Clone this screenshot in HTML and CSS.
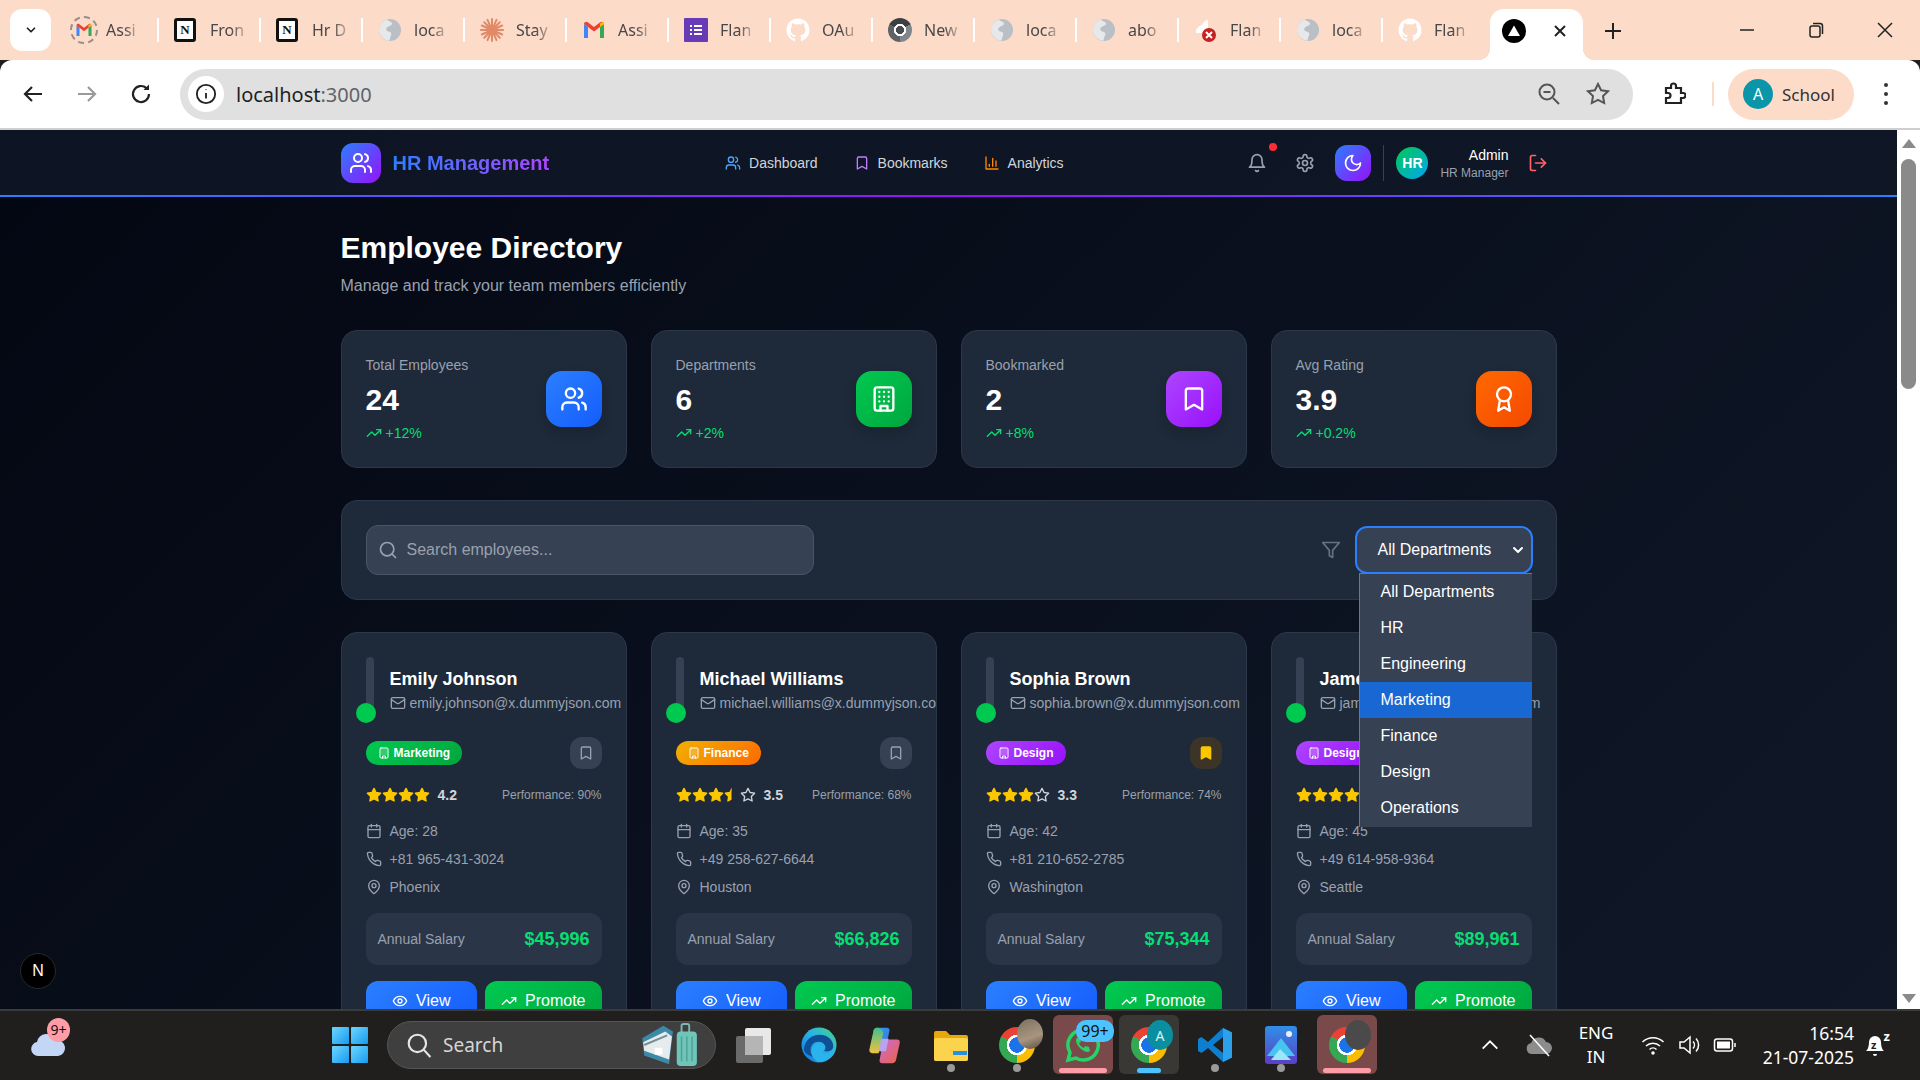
FILE: index.html
```html
<!DOCTYPE html>
<html lang="en">
<head>
    <meta charset="UTF-8">
    <title>HR Management</title>
    <link rel="stylesheet" href="styles.css">
</head>
<body>
    <!-- Icon sprite -->
    <svg class="sprite" aria-hidden="true">
        <defs>
            <linearGradient id="edgeGrad" x1="0" y1="1" x2="1" y2="0"><stop offset="0" stop-color="#1173d8"/><stop offset="0.55" stop-color="#28b3e8"/><stop offset="1" stop-color="#48d67c"/></linearGradient>
            <linearGradient id="photoGrad" x1="0" y1="0" x2="0" y2="1"><stop offset="0" stop-color="#2f8fe8"/><stop offset="1" stop-color="#5b3fc4"/></linearGradient>
            <linearGradient id="copilotA" x1="0" y1="0" x2="1" y2="1"><stop offset="0" stop-color="#2ea8f0"/><stop offset="1" stop-color="#3f6be0"/></linearGradient>
            <linearGradient id="copilotB" x1="0" y1="0" x2="1" y2="1"><stop offset="0" stop-color="#c768e0"/><stop offset="1" stop-color="#f0653c"/></linearGradient>
            <linearGradient id="copilotC" x1="0" y1="0" x2="0" y2="1"><stop offset="0" stop-color="#3fbf8f"/><stop offset="1" stop-color="#f2c23c"/></linearGradient>
        </defs>
        <symbol id="i-users" viewBox="0 0 24 24"><path d="M16 21v-2a4 4 0 0 0-4-4H6a4 4 0 0 0-4 4v2"/><circle cx="9" cy="7" r="4"/><path d="M22 21v-2a4 4 0 0 0-3-3.87"/><path d="M16 3.13a4 4 0 0 1 0 7.75"/></symbol>
        <symbol id="i-bookmark" viewBox="0 0 24 24"><path d="m19 21-7-4-7 4V5a2 2 0 0 1 2-2h10a2 2 0 0 1 2 2v16z"/></symbol>
        <symbol id="i-chart" viewBox="0 0 24 24"><path d="M3 3v18h18"/><path d="M18 17V9"/><path d="M13 17V5"/><path d="M8 17v-3"/></symbol>
        <symbol id="i-bell" viewBox="0 0 24 24"><path d="M6 8a6 6 0 0 1 12 0c0 7 3 9 3 9H3s3-2 3-9"/><path d="M10.3 21a1.94 1.94 0 0 0 3.4 0"/></symbol>
        <symbol id="i-gear" viewBox="0 0 24 24"><path d="M12.22 2h-.44a2 2 0 0 0-2 2v.18a2 2 0 0 1-1 1.73l-.43.25a2 2 0 0 1-2 0l-.15-.08a2 2 0 0 0-2.73.73l-.22.38a2 2 0 0 0 .73 2.73l.15.1a2 2 0 0 1 1 1.72v.51a2 2 0 0 1-1 1.74l-.15.09a2 2 0 0 0-.73 2.73l.22.38a2 2 0 0 0 2.73.73l.15-.08a2 2 0 0 1 2 0l.43.25a2 2 0 0 1 1 1.73V20a2 2 0 0 0 2 2h.44a2 2 0 0 0 2-2v-.18a2 2 0 0 1 1-1.73l.43-.25a2 2 0 0 1 2 0l.15.08a2 2 0 0 0 2.73-.73l.22-.39a2 2 0 0 0-.73-2.73l-.15-.08a2 2 0 0 1-1-1.74v-.5a2 2 0 0 1 1-1.74l.15-.09a2 2 0 0 0 .73-2.73l-.22-.38a2 2 0 0 0-2.73-.73l-.15.08a2 2 0 0 1-2 0l-.43-.25a2 2 0 0 1-1-1.73V4a2 2 0 0 0-2-2z"/><circle cx="12" cy="12" r="3"/></symbol>
        <symbol id="i-moon" viewBox="0 0 24 24"><path d="M12 3a6 6 0 0 0 9 9 9 9 0 1 1-9-9Z"/></symbol>
        <symbol id="i-logout" viewBox="0 0 24 24"><path d="M9 21H5a2 2 0 0 1-2-2V5a2 2 0 0 1 2-2h4"/><polyline points="16 17 21 12 16 7"/><line x1="21" x2="9" y1="12" y2="12"/></symbol>
        <symbol id="i-trend" viewBox="0 0 24 24"><polyline points="22 7 13.5 15.5 8.5 10.5 2 17"/><polyline points="16 7 22 7 22 13"/></symbol>
        <symbol id="i-building" viewBox="0 0 24 24"><rect x="4" y="2" width="16" height="20" rx="2"/><path d="M9 22v-4h6v4"/><path d="M8 6h.01M12 6h.01M16 6h.01M8 10h.01M12 10h.01M16 10h.01M8 14h.01M12 14h.01M16 14h.01"/></symbol>
        <symbol id="i-award" viewBox="0 0 24 24"><circle cx="12" cy="8" r="6"/><path d="M15.477 12.89 17 22l-5-3-5 3 1.523-9.11"/></symbol>
        <symbol id="i-search" viewBox="0 0 24 24"><circle cx="11" cy="11" r="8"/><path d="m21 21-4.3-4.3"/></symbol>
        <symbol id="i-filter" viewBox="0 0 24 24"><polygon points="22 3 2 3 10 12.46 10 19 14 21 14 12.46 22 3"/></symbol>
        <symbol id="i-mail" viewBox="0 0 24 24"><rect width="20" height="16" x="2" y="4" rx="2"/><path d="m22 7-8.97 5.7a1.94 1.94 0 0 1-2.06 0L2 7"/></symbol>
        <symbol id="i-star" viewBox="0 0 24 24"><polygon points="12 2 15.09 8.26 22 9.27 17 14.14 18.18 21.02 12 17.77 5.82 21.02 7 14.14 2 9.27 8.91 8.26 12 2"/></symbol>
        <symbol id="i-calendar" viewBox="0 0 24 24"><path d="M8 2v4M16 2v4"/><rect width="18" height="18" x="3" y="4" rx="2"/><path d="M3 10h18"/></symbol>
        <symbol id="i-phone" viewBox="0 0 24 24"><path d="M22 16.92v3a2 2 0 0 1-2.18 2 19.79 19.79 0 0 1-8.63-3.07 19.5 19.5 0 0 1-6-6 19.79 19.79 0 0 1-3.07-8.67A2 2 0 0 1 4.11 2h3a2 2 0 0 1 2 1.72 12.84 12.84 0 0 0 .7 2.81 2 2 0 0 1-.45 2.11L8.09 9.91a16 16 0 0 0 6 6l1.27-1.27a2 2 0 0 1 2.11-.45 12.84 12.84 0 0 0 2.81.7A2 2 0 0 1 22 16.92z"/></symbol>
        <symbol id="i-pin" viewBox="0 0 24 24"><path d="M20 10c0 6-8 12-8 12s-8-6-8-12a8 8 0 0 1 16 0Z"/><circle cx="12" cy="10" r="3"/></symbol>
        <symbol id="i-eye" viewBox="0 0 24 24"><path d="M2 12s3-7 10-7 10 7 10 7-3 7-10 7-10-7-10-7Z"/><circle cx="12" cy="12" r="3"/></symbol>
        <symbol id="i-chevron" viewBox="0 0 24 24"><path d="m6 9 6 6 6-6"/></symbol>
        <symbol id="f-globe" viewBox="0 0 24 24"><circle cx="12" cy="12" r="11" fill="#b9bfc5"/><path d="M9 1.6c1.6 2.2 4.6 1.8 5 4 .3 2-3 2.4-4.6 3.6C7.600 10.600 8 13 10.500 13.400c2.500.4 3.500 2 2.500 4-.8 1.600-1 3.400-1.800 5.400C6 22.400 1 17.600 1 12 1 7 4.500 2.800 9 1.600z" fill="#e6e8ea"/></symbol>
        <symbol id="f-gmail" viewBox="0 0 24 24"><path d="M2 20V6l4 3v11z" fill="#4285f4"/><path d="M22 20V6l-4 3v11z" fill="#34a853"/><path d="M2 6c0-2 2.200-3 3.800-1.800L12 9l6.200-4.800C19.800 3 22 4 22 6l-4 3-6 4.500L6 9z" fill="#ea4335"/><path d="M18 9l4-3c0-1-.5-1.800-1.300-2.200L18 5.800z" fill="#fbbc04"/></symbol>
        <symbol id="f-forms" viewBox="0 0 24 24"><rect width="24" height="24" rx="1" fill="#673ab7"/><path d="M6 7h2v2H6zM10 7h8v2h-8zM6 11h2v2H6zM10 11h8v2h-8zM6 15h2v2H6zM10 15h8v2h-8z" fill="#fff"/></symbol>
        <symbol id="f-github" viewBox="0 0 24 24"><path fill="#fff" d="M12 .5C5.650.5.500 5.650.500 12c0 5.080 3.290 9.390 7.860 10.910.580.100.790-.250.790-.560v-2c-3.200.700-3.870-1.360-3.870-1.360-.520-1.330-1.280-1.690-1.280-1.690-1.050-.720.080-.700.080-.700 1.160.080 1.770 1.190 1.770 1.190 1.030 1.760 2.700 1.250 3.360.960.100-.750.400-1.250.730-1.540-2.550-.290-5.240-1.280-5.240-5.690 0-1.260.450-2.280 1.190-3.090-.120-.290-.520-1.460.110-3.050 0 0 .970-.310 3.170 1.180a11 11 0 0 1 5.770 0c2.200-1.490 3.170-1.180 3.170-1.180.630 1.590.230 2.760.110 3.050.740.810 1.190 1.830 1.190 3.090 0 4.420-2.690 5.390-5.250 5.680.410.360.780 1.060.780 2.140v3.170c0 .310.210.670.790.560A11.500 11.500 0 0 0 23.500 12C23.500 5.650 18.350.500 12 .500z"/></symbol>
    </svg>

    <!-- Browser tab strip -->
    <div class="tab-strip">
        <div class="tab-menu"><svg class="ico ico-dark ico-14"><use href="#i-chevron"/></svg></div>
        <div class="tab-list">
            <div class="tab">
                <span class="fav-ring"><svg class="fav-small"><use href="#f-gmail"/></svg></span>
                <span class="tab-label">Assi</span>
            </div>
            <div class="tab"><span class="fav-notion">N</span><span class="tab-label">Fron</span></div>
            <div class="tab"><span class="fav-notion">N</span><span class="tab-label">Hr D</span></div>
            <div class="tab"><svg class="fav"><use href="#f-globe"/></svg><span class="tab-label">loca</span></div>
            <div class="tab">
                <svg class="fav" viewBox="0 0 24 24" stroke="#e08a68" stroke-width="2" stroke-linecap="round"><path d="M12 1v22M1 12h22M4.200 4.200l15.600 15.600M19.800 4.200 4.200 19.800M7.500 1.800l9 20.400M16.500 1.800l-9 20.400M1.800 7.500l20.400 9M22.200 7.500l-20.400 9"/></svg>
                <span class="tab-label">Stay</span>
            </div>
            <div class="tab"><svg class="fav"><use href="#f-gmail"/></svg><span class="tab-label">Assi</span></div>
            <div class="tab"><svg class="fav"><use href="#f-forms"/></svg><span class="tab-label">Flan</span></div>
            <div class="tab"><svg class="fav"><use href="#f-github"/></svg><span class="tab-label">OAu</span></div>
            <div class="tab"><span class="chrome-logo chrome-gray"></span><span class="tab-label">New</span></div>
            <div class="tab"><svg class="fav"><use href="#f-globe"/></svg><span class="tab-label">loca</span></div>
            <div class="tab"><svg class="fav"><use href="#f-globe"/></svg><span class="tab-label">abo</span></div>
            <div class="tab">
                <svg class="fav" viewBox="0 0 24 24"><path d="M2 14c0-4 3-6 6-7 1-3 3-5 6-5v13H2z" fill="#fff"/><circle cx="15" cy="17" r="7" fill="#c5221f"/><path d="m12 14 6 6m0-6-6 6" stroke="#fff" stroke-width="2"/></svg>
                <span class="tab-label">Flan</span>
            </div>
            <div class="tab"><svg class="fav"><use href="#f-globe"/></svg><span class="tab-label">loca</span></div>
            <div class="tab tab-last"><svg class="fav"><use href="#f-github"/></svg><span class="tab-label">Flan</span></div>
        </div>
        <div class="tab-active">
            <svg class="fav" viewBox="0 0 24 24"><circle cx="12" cy="12" r="12" fill="#000"/><path d="M12 6.500 18 17H6z" fill="#fff"/></svg>
            <svg class="tab-close" viewBox="0 0 14 14"><path d="m2 2 10 10M12 2 2 12"/></svg>
        </div>
        <svg class="tab-plus" viewBox="0 0 18 18"><path d="M9 1v16M1 9h16"/></svg>
        <div class="win-controls">
            <svg viewBox="0 0 16 16"><path d="M1 8h14"/></svg>
            <svg viewBox="0 0 16 16"><rect x="2" y="4" width="10" height="11" rx="2"/><path d="M5 1.500h7a2.500 2.500 0 0 1 2.500 2.500v8"/></svg>
            <svg viewBox="0 0 16 16"><path d="m1 1 14 14M15 1 1 15"/></svg>
        </div>
    </div>

    <!-- Browser toolbar -->
    <div class="toolbar">
        <svg class="tool-icon" viewBox="0 0 24 24"><path d="M21 12H4M11 5l-7 7 7 7"/></svg>
        <svg class="tool-icon tool-off" viewBox="0 0 24 24"><path d="M3 12h17M13 5l7 7-7 7"/></svg>
        <svg class="tool-icon" viewBox="0 0 24 24"><path d="M20 12a8 8 0 1 1-2.600-5.900"/><path d="M20 2.500V8h-5.500" fill="#222" stroke="none"/></svg>
        <div class="omnibox">
            <span class="site-info"><svg viewBox="0 0 24 24"><circle cx="12" cy="12" r="10"/><path d="M12 11v6M12 7v.5"/></svg></span>
            <span class="url">localhost<span class="url-port">:3000</span></span>
            <svg class="omni-icon" viewBox="0 0 24 24"><circle cx="10" cy="10" r="7.500"/><path d="m16 16 6 6M6.500 10h7"/></svg>
            <svg class="omni-icon" viewBox="0 0 24 24"><polygon points="12 2 15.090 8.260 22 9.270 17 14.140 18.180 21.020 12 17.770 5.820 21.020 7 14.140 2 9.270 8.910 8.260 12 2"/></svg>
        </div>
        <svg class="tool-icon tool-ext" viewBox="0 0 24 24"><path d="M4 6h5V4a2.500 2.500 0 0 1 5 0v2h5v5h2a2.500 2.500 0 0 1 0 5h-2v5H4v-5h2a2.500 2.500 0 0 0 0-5H4z"/></svg>
        <span class="tool-sep"></span>
        <div class="profile"><span class="profile-dot">A</span><span>School</span></div>
        <div class="kebab"><span></span><span></span><span></span></div>
    </div>

    <!-- Viewport: the app and the scrollbar -->
    <div class="viewport">
        <div class="app">
            <nav class="navbar">
                <div class="nav-inner">
                    <div class="brand">
                        <span class="brand-logo"><svg class="ico ico-white ico-24"><use href="#i-users"/></svg></span>
                        <span class="brand-name">HR Management</span>
                    </div>
                    <div class="nav-links">
                        <a class="nav-link"><svg class="ico ico-16 c-blue"><use href="#i-users"/></svg>Dashboard</a>
                        <a class="nav-link"><svg class="ico ico-16 c-purple"><use href="#i-bookmark"/></svg>Bookmarks</a>
                        <a class="nav-link"><svg class="ico ico-16 c-orange"><use href="#i-chart"/></svg>Analytics</a>
                    </div>
                    <div class="nav-actions">
                        <button class="icon-btn"><svg class="ico ico-20"><use href="#i-bell"/></svg><span class="notify-dot"></span></button>
                        <button class="icon-btn"><svg class="ico ico-20"><use href="#i-gear"/></svg></button>
                        <button class="theme-btn"><svg class="ico ico-white ico-20"><use href="#i-moon"/></svg></button>
                        <span class="nav-divider"></span>
                        <span class="user-avatar">HR</span>
                        <div class="user-info">
                            <div class="user-name">Admin</div>
                            <div class="user-role">HR Manager</div>
                        </div>
                        <button class="icon-btn logout-btn"><svg class="ico ico-20"><use href="#i-logout"/></svg></button>
                    </div>
                </div>
            </nav>

            <main class="main">
                <h1 class="page-title">Employee Directory</h1>
                <p class="page-sub">Manage and track your team members efficiently</p>

                <section class="stats">
                    <div class="stat-card">
                        <div>
                            <div class="stat-label">Total Employees</div>
                            <div class="stat-value">24</div>
                            <div class="stat-trend"><svg class="ico ico-16"><use href="#i-trend"/></svg>+12%</div>
                        </div>
                        <span class="stat-icon grad-blue"><svg class="ico ico-white ico-28"><use href="#i-users"/></svg></span>
                    </div>
                    <div class="stat-card">
                        <div>
                            <div class="stat-label">Departments</div>
                            <div class="stat-value">6</div>
                            <div class="stat-trend"><svg class="ico ico-16"><use href="#i-trend"/></svg>+2%</div>
                        </div>
                        <span class="stat-icon grad-green"><svg class="ico ico-white ico-28"><use href="#i-building"/></svg></span>
                    </div>
                    <div class="stat-card">
                        <div>
                            <div class="stat-label">Bookmarked</div>
                            <div class="stat-value">2</div>
                            <div class="stat-trend"><svg class="ico ico-16"><use href="#i-trend"/></svg>+8%</div>
                        </div>
                        <span class="stat-icon grad-purple"><svg class="ico ico-white ico-28"><use href="#i-bookmark"/></svg></span>
                    </div>
                    <div class="stat-card">
                        <div>
                            <div class="stat-label">Avg Rating</div>
                            <div class="stat-value">3.9</div>
                            <div class="stat-trend"><svg class="ico ico-16"><use href="#i-trend"/></svg>+0.2%</div>
                        </div>
                        <span class="stat-icon grad-orange"><svg class="ico ico-white ico-28"><use href="#i-award"/></svg></span>
                    </div>
                </section>

                <section class="filter-bar">
                    <div class="search-box">
                        <svg class="ico ico-20 search-icon"><use href="#i-search"/></svg>
                        <input class="search-input" type="text" placeholder="Search employees...">
                    </div>
                    <div class="filter-right">
                        <svg class="ico ico-20 filter-icon"><use href="#i-filter"/></svg>
                        <div class="dept-select">
                            <span>All Departments</span>
                            <svg class="ico ico-white ico-16 dept-chevron"><use href="#i-chevron"/></svg>
                            <ul class="dept-menu">
                                <li>All Departments</li>
                                <li>HR</li>
                                <li>Engineering</li>
                                <li class="selected">Marketing</li>
                                <li>Finance</li>
                                <li>Design</li>
                                <li>Operations</li>
                            </ul>
                        </div>
                    </div>
                </section>

                <section class="employees">
                    <!-- Emily -->
                    <article class="emp-card">
                        <div class="emp-head">
                            <div class="emp-avatar"><span class="emp-status"></span></div>
                            <div>
                                <div class="emp-name">Emily Johnson</div>
                                <div class="emp-email"><svg class="ico ico-16"><use href="#i-mail"/></svg>emily.johnson@x.dummyjson.com</div>
                            </div>
                        </div>
                        <div class="emp-tags">
                            <span class="dept-badge grad-green"><svg class="ico ico-white ico-12"><use href="#i-building"/></svg>Marketing</span>
                            <button class="mark-btn"><svg class="ico ico-16"><use href="#i-bookmark"/></svg></button>
                        </div>
                        <div class="emp-rating">
                            <span class="stars">
                                <svg class="star-full"><use href="#i-star"/></svg><svg class="star-full"><use href="#i-star"/></svg><svg class="star-full"><use href="#i-star"/></svg><svg class="star-full"><use href="#i-star"/></svg>
                            </span>
                            <span class="rating-num">4.2</span>
                            <span class="perf">Performance: 90%</span>
                        </div>
                        <ul class="emp-info">
                            <li><svg class="ico ico-16"><use href="#i-calendar"/></svg>Age: 28</li>
                            <li><svg class="ico ico-16"><use href="#i-phone"/></svg>+81 965-431-3024</li>
                            <li><svg class="ico ico-16"><use href="#i-pin"/></svg>Phoenix</li>
                        </ul>
                        <div class="salary"><span class="salary-label">Annual Salary</span><span class="salary-value">$45,996</span></div>
                        <div class="emp-actions">
                            <button class="act-btn grad-blue"><svg class="ico ico-white ico-16"><use href="#i-eye"/></svg>View</button>
                            <button class="act-btn grad-green"><svg class="ico ico-white ico-16"><use href="#i-trend"/></svg>Promote</button>
                        </div>
                    </article>

                    <!-- Michael -->
                    <article class="emp-card">
                        <div class="emp-head">
                            <div class="emp-avatar"><span class="emp-status"></span></div>
                            <div>
                                <div class="emp-name">Michael Williams</div>
                                <div class="emp-email"><svg class="ico ico-16"><use href="#i-mail"/></svg>michael.williams@x.dummyjson.com</div>
                            </div>
                        </div>
                        <div class="emp-tags">
                            <span class="dept-badge grad-amber"><svg class="ico ico-white ico-12"><use href="#i-building"/></svg>Finance</span>
                            <button class="mark-btn"><svg class="ico ico-16"><use href="#i-bookmark"/></svg></button>
                        </div>
                        <div class="emp-rating">
                            <span class="stars">
                                <svg class="star-full"><use href="#i-star"/></svg><svg class="star-full"><use href="#i-star"/></svg><svg class="star-full"><use href="#i-star"/></svg><span class="star-half"><svg class="star-full"><use href="#i-star"/></svg></span><svg class="star-empty"><use href="#i-star"/></svg>
                            </span>
                            <span class="rating-num">3.5</span>
                            <span class="perf">Performance: 68%</span>
                        </div>
                        <ul class="emp-info">
                            <li><svg class="ico ico-16"><use href="#i-calendar"/></svg>Age: 35</li>
                            <li><svg class="ico ico-16"><use href="#i-phone"/></svg>+49 258-627-6644</li>
                            <li><svg class="ico ico-16"><use href="#i-pin"/></svg>Houston</li>
                        </ul>
                        <div class="salary"><span class="salary-label">Annual Salary</span><span class="salary-value">$66,826</span></div>
                        <div class="emp-actions">
                            <button class="act-btn grad-blue"><svg class="ico ico-white ico-16"><use href="#i-eye"/></svg>View</button>
                            <button class="act-btn grad-green"><svg class="ico ico-white ico-16"><use href="#i-trend"/></svg>Promote</button>
                        </div>
                    </article>

                    <!-- Sophia -->
                    <article class="emp-card">
                        <div class="emp-head">
                            <div class="emp-avatar"><span class="emp-status"></span></div>
                            <div>
                                <div class="emp-name">Sophia Brown</div>
                                <div class="emp-email"><svg class="ico ico-16"><use href="#i-mail"/></svg>sophia.brown@x.dummyjson.com</div>
                            </div>
                        </div>
                        <div class="emp-tags">
                            <span class="dept-badge grad-purple"><svg class="ico ico-white ico-12"><use href="#i-building"/></svg>Design</span>
                            <button class="mark-btn marked"><svg class="ico ico-16"><use href="#i-bookmark"/></svg></button>
                        </div>
                        <div class="emp-rating">
                            <span class="stars">
                                <svg class="star-full"><use href="#i-star"/></svg><svg class="star-full"><use href="#i-star"/></svg><svg class="star-full"><use href="#i-star"/></svg><svg class="star-empty"><use href="#i-star"/></svg>
                            </span>
                            <span class="rating-num">3.3</span>
                            <span class="perf">Performance: 74%</span>
                        </div>
                        <ul class="emp-info">
                            <li><svg class="ico ico-16"><use href="#i-calendar"/></svg>Age: 42</li>
                            <li><svg class="ico ico-16"><use href="#i-phone"/></svg>+81 210-652-2785</li>
                            <li><svg class="ico ico-16"><use href="#i-pin"/></svg>Washington</li>
                        </ul>
                        <div class="salary"><span class="salary-label">Annual Salary</span><span class="salary-value">$75,344</span></div>
                        <div class="emp-actions">
                            <button class="act-btn grad-blue"><svg class="ico ico-white ico-16"><use href="#i-eye"/></svg>View</button>
                            <button class="act-btn grad-green"><svg class="ico ico-white ico-16"><use href="#i-trend"/></svg>Promote</button>
                        </div>
                    </article>

                    <!-- James -->
                    <article class="emp-card">
                        <div class="emp-head">
                            <div class="emp-avatar"><span class="emp-status"></span></div>
                            <div>
                                <div class="emp-name">James Davis</div>
                                <div class="emp-email"><svg class="ico ico-16"><use href="#i-mail"/></svg>james.davis@x.dummyjson.com</div>
                            </div>
                        </div>
                        <div class="emp-tags">
                            <span class="dept-badge grad-purple"><svg class="ico ico-white ico-12"><use href="#i-building"/></svg>Design</span>
                            <button class="mark-btn"><svg class="ico ico-16"><use href="#i-bookmark"/></svg></button>
                        </div>
                        <div class="emp-rating">
                            <span class="stars">
                                <svg class="star-full"><use href="#i-star"/></svg><svg class="star-full"><use href="#i-star"/></svg><svg class="star-full"><use href="#i-star"/></svg><svg class="star-full"><use href="#i-star"/></svg>
                            </span>
                            <span class="rating-num">4.1</span>
                            <span class="perf">Performance: 82%</span>
                        </div>
                        <ul class="emp-info">
                            <li><svg class="ico ico-16"><use href="#i-calendar"/></svg>Age: 45</li>
                            <li><svg class="ico ico-16"><use href="#i-phone"/></svg>+49 614-958-9364</li>
                            <li><svg class="ico ico-16"><use href="#i-pin"/></svg>Seattle</li>
                        </ul>
                        <div class="salary"><span class="salary-label">Annual Salary</span><span class="salary-value">$89,961</span></div>
                        <div class="emp-actions">
                            <button class="act-btn grad-blue"><svg class="ico ico-white ico-16"><use href="#i-eye"/></svg>View</button>
                            <button class="act-btn grad-green"><svg class="ico ico-white ico-16"><use href="#i-trend"/></svg>Promote</button>
                        </div>
                    </article>
                </section>
            </main>

            <span class="next-badge">N</span>
        </div>

        <div class="scrollbar">
            <span class="scroll-up"></span>
            <div class="scroll-track"><span class="scroll-thumb"></span></div>
            <span class="scroll-down"></span>
        </div>
    </div>

    <!-- Windows taskbar -->
    <div class="taskbar">
        <div class="weather">
            <svg viewBox="0 0 36 24" class="weather-cloud"><path d="M8 23a7 7 0 0 1-1-13.900A10 10 0 0 1 26 7a8 8 0 0 1 2 16z" fill="#c3d6f5"/></svg>
            <span class="weather-badge">9+</span>
        </div>

        <div class="task-tile">
            <span class="win-logo"><i></i><i></i><i></i><i></i></span>
        </div>

        <div class="task-search">
            <svg viewBox="0 0 24 24" class="task-search-icon"><circle cx="10.500" cy="10.500" r="8"/><path d="m16.500 16.500 6 6.500"/></svg>
            <span class="task-search-text">Search</span>
            <svg viewBox="0 0 64 48" class="task-search-art">
                <rect x="43" y="2" width="8" height="10" rx="2" fill="none" stroke="#7fb8b0" stroke-width="2"/>
                <rect x="38" y="10" width="21" height="36" rx="4" fill="#6fc5b8"/>
                <path d="M43 15v26M48.500 15v26M54 15v26" stroke="#4f9f95" stroke-width="1.500"/>
                <path d="M2 17 24 4l10 6-4 34-26-9z" fill="#3d8aa8"/>
                <path d="M3 21 26 10l7 5-3 24-26-9z" fill="#e6ecee"/>
                <path d="M15 27h8v7h-8z" fill="#fff"/><path d="M4 24l24-10" stroke="#7b8c95" stroke-width="2"/>
            </svg>
        </div>

        <div class="task-tile task-tile-first">
            <svg viewBox="0 0 36 36" class="task-icon"><rect x="10" y="1" width="26" height="27" rx="2" fill="#e8e8e8"/><rect x="1" y="9" width="27" height="27" rx="2" fill="#6a6a6a"/><rect x="10" y="9" width="18" height="19" fill="#b5b5b5"/></svg>
        </div>
        <div class="task-tile">
            <svg viewBox="0 0 36 36" class="task-icon"><circle cx="18" cy="18" r="17.500" fill="url(#edgeGrad)"/><path d="M3 22C4 10 16 5 25 9c6 3 8 8 7 12-1 3-5 4-9 3 2-2 2-5 0-7-3-3-9-3-12 1-2 3-2 8 1 12C7 28 3 26 3 22z" fill="#0f4f96"/><path d="M12 30c-3-5-2-11 3-13 3-1 7 0 8 3 1 3-2 5-2 5 4 3 9 2 12-1-2 7-8 11-15 11-2 0-4-2-6-5z" fill="#2bb3ec"/></svg>
        </div>
        <div class="task-tile">
            <svg viewBox="0 0 36 44" class="task-icon task-icon-tall"><path d="M9 3h11c2 0 3 1 3 3l-4 19c-1 3-3 4-5 4H5c-3 0-4-2-3-5l4-17C7 4 8 3 9 3z" fill="url(#copilotA)"/><path d="M16 16h15c3 0 4 2 3 5l-4 18c-1 2-2 3-4 3H15c-2 0-3-1-3-3l4-23z" fill="url(#copilotB)"/><path d="M9 3C6 3 5 6 5 8L1 26c-1 3 1 5 4 5h6l5-22c0-3-3-6-7-6z" fill="url(#copilotC)"/><path d="M14 15h8l-3 14h-8z" fill="#b9a4ee"/></svg>
        </div>
        <div class="task-tile">
            <svg viewBox="0 0 36 36" class="task-icon"><path d="M1 6a2 2 0 0 1 2-2h10l4 4h16a2 2 0 0 1 2 2v22a2 2 0 0 1-2 2H3a2 2 0 0 1-2-2z" fill="#e8a80c"/><rect x="1" y="11" width="34" height="23" rx="2" fill="#fbd34d"/><rect x="20" y="24" width="14" height="4" fill="#2790dc"/></svg>
            <span class="tile-dot"></span>
        </div>
        <div class="task-tile">
            <span class="chrome-logo"></span>
            <span class="tile-mini tile-mini-photo"></span>
            <span class="tile-dot"></span>
        </div>
        <div class="task-tile tile-alert">
            <svg viewBox="0 0 36 36" class="task-icon"><path d="M18 3a15 15 0 0 0-13 22.500L3 33l7.800-2A15 15 0 1 0 18 3z" fill="none" stroke="#25d366" stroke-width="3.500"/><path d="M12 11c-2 2-1 6 3 10s8 5 10 3l-1-4-4-1-1 2c-3-1-4-3-5-5l2-1-1-4z" fill="#25d366"/></svg>
            <span class="tile-count">99+</span>
            <span class="tile-bar"></span>
        </div>
        <div class="task-tile tile-open">
            <span class="chrome-logo"></span>
            <span class="tile-mini tile-mini-a">A</span>
            <span class="tile-bar tile-bar-blue"></span>
        </div>
        <div class="task-tile">
            <svg viewBox="0 0 36 36" class="task-icon"><path d="M26 1 35 5.500v25L26 35 11 21l-6.500 5L1 24V12l3.500-2L11 15z" fill="#0c7fd0"/><path d="M26 10v16l-10-8z" fill="#201f1e"/><path d="M26 1 35 5.500v25L26 35z" fill="#2aa1ea"/></svg>
            <span class="tile-dot"></span>
        </div>
        <div class="task-tile">
            <svg viewBox="0 0 32 38" class="task-icon-photo"><rect width="32" height="38" rx="3" fill="url(#photoGrad)"/><circle cx="24" cy="8" r="3" fill="#e8f2ff"/><path d="M2 30 16 12l14 18z" fill="#46c3ee"/><path d="M6 34l9-11 11 11z" fill="#9be6f8"/></svg>
            <span class="tile-dot"></span>
        </div>
        <div class="task-tile tile-alert">
            <span class="chrome-logo"></span>
            <span class="tile-mini tile-mini-gray"></span>
            <span class="tile-bar"></span>
        </div>

        <div class="tray">
            <svg viewBox="0 0 24 24" class="tray-chevron"><path d="m4 16 8-8 8 8"/></svg>
            <svg viewBox="0 0 28 24" class="tray-cloud"><path d="M7 21a5.500 5.500 0 0 1-.8-10.900A8 8 0 0 1 21 9a6 6 0 0 1 0 12z" fill="#8c8c8c"/><path d="m5 2 19 21" stroke="#fff" stroke-width="1.500"/></svg>
            <div class="tray-lang"><div>ENG</div><div>IN</div></div>
            <svg viewBox="0 0 24 24" class="tray-icon tray-wifi"><path d="M1.500 9a15 15 0 0 1 21 0M5 13a10 10 0 0 1 14 0M8.500 16.500a5 5 0 0 1 7 0"/><circle cx="12" cy="20" r="1" fill="#fff"/></svg>
            <svg viewBox="0 0 24 24" class="tray-icon"><path d="M3 9v6h4l6 5V4L7 9z"/><path d="M16 8.500a5 5 0 0 1 0 7M19 5.500a9.500 9.500 0 0 1 0 13"/></svg>
            <svg viewBox="0 0 24 24" class="tray-icon"><rect x="1.500" y="6" width="18" height="12" rx="2.500"/><rect x="4" y="8.500" width="13" height="7" fill="#fff" stroke="none"/><path d="M22 10v4"/></svg>
            <div class="tray-clock"><div>16:54</div><div>21-07-2025</div></div>
            <div class="tray-bell">
                <svg viewBox="0 0 24 28"><path d="M6 11a6 6 0 0 1 12 0c0 7 3 9 3 9H3s3-2 3-9z" fill="#fff"/><path d="M10 23a2 2 0 0 0 4 0z" fill="#fff"/></svg>
                <span class="tray-zz">z</span>
                <span class="tray-zz-inner">z</span>
            </div>
        </div>
    </div>
</body>
</html>
```

FILE: styles.css
```css
* {
    margin: 0;
    padding: 0;
    box-sizing: border-box;
}

html, body {
    width: 1920px;
    height: 1080px;
    overflow: hidden;
}

body {
    display: flex;
    flex-direction: column;
    font-family: "Liberation Sans", Arial, sans-serif;
    background: #201f1e;
}

ul {
    list-style: none;
}

button {
    border: none;
    background: none;
    font-family: inherit;
    cursor: pointer;
}

.sprite {
    position: absolute;
    width: 0;
    height: 0;
}

/* Shared line icons */
.ico {
    display: block;
    flex-shrink: 0;
    fill: none;
    stroke: currentColor;
    stroke-width: 2;
    stroke-linecap: round;
    stroke-linejoin: round;
}

.ico-12 { width: 12px; height: 12px; }
.ico-14 { width: 14px; height: 14px; }
.ico-16 { width: 16px; height: 16px; }
.ico-20 { width: 20px; height: 20px; }
.ico-24 { width: 24px; height: 24px; }
.ico-28 { width: 28px; height: 28px; }
.ico-white { color: #fff; }
.ico-dark { color: #222; stroke-width: 3; }
.c-blue { color: #51a2ff; }
.c-purple { color: #c27aff; }
.c-orange { color: #ff8904; }

.grad-blue { background: linear-gradient(135deg, #2b7fff, #155dfc); }
.grad-green { background: linear-gradient(135deg, #00c950, #00a63e); }
.grad-purple { background: linear-gradient(135deg, #ad46ff, #9810fa); }
.grad-orange { background: linear-gradient(135deg, #ff6900, #f54900); }
.grad-amber { background: linear-gradient(135deg, #f0b100, #ff6900); }

/* Browser tab strip */
.tab-strip {
    height: 60px;
    flex-shrink: 0;
    display: flex;
    align-items: flex-start;
    background: #fddbc9;
    font-family: "Noto Sans", sans-serif;
}

.tab-menu {
    width: 41px;
    height: 42px;
    margin: 9px 6px 0 10px;
    display: flex;
    align-items: center;
    justify-content: center;
    background: #fff;
    border-radius: 12px;
}

.tab-list {
    display: flex;
}

.tab {
    width: 102px;
    height: 24px;
    margin-top: 18px;
    padding-left: 15px;
    display: flex;
    align-items: center;
    gap: 12px;
    border-right: 2px solid #fff;
}

.tab:first-child {
    padding-left: 13px;
    gap: 8px;
}

.tab-last {
    border-right: none;
}

.fav {
    width: 24px;
    height: 24px;
    flex-shrink: 0;
    fill: none;
}

.fav-ring {
    width: 28px;
    height: 28px;
    flex-shrink: 0;
    display: flex;
    align-items: center;
    justify-content: center;
    border: 2px dashed #9a8f88;
    border-radius: 50%;
}

.fav-small {
    width: 18px;
    height: 18px;
}

.fav-notion {
    width: 22px;
    height: 24px;
    margin-right: 2px;
    flex-shrink: 0;
    display: flex;
    align-items: center;
    justify-content: center;
    background: #fff;
    border: 3px solid #111;
    border-radius: 3px;
    font: bold 13px "Liberation Serif", serif;
    color: #111;
}

.tab-label {
    white-space: nowrap;
    font-size: 16px;
    color: #474747;
    -webkit-mask-image: linear-gradient(90deg, #000 60%, rgba(0, 0, 0, 0.35) 100%);
    mask-image: linear-gradient(90deg, #000 60%, rgba(0, 0, 0, 0.35) 100%);
}

.tab-active {
    position: relative;
    width: 93px;
    height: 51px;
    margin: 9px 0 0 5px;
    padding: 0 16px 7px 12px;
    display: flex;
    align-items: center;
    justify-content: space-between;
    background: #fff;
    border-radius: 14px 14px 0 0;
}

.tab-active::before,
.tab-active::after {
    content: "";
    position: absolute;
    bottom: 0;
    width: 12px;
    height: 12px;
}

.tab-active::before {
    left: -12px;
    background: radial-gradient(circle at 0 0, transparent 12px, #fff 12.5px);
}

.tab-active::after {
    right: -12px;
    background: radial-gradient(circle at 100% 0, transparent 12px, #fff 12.5px);
}

.tab-close {
    width: 14px;
    height: 14px;
    fill: none;
    stroke: #222;
    stroke-width: 2;
}

.tab-plus {
    width: 18px;
    height: 18px;
    margin: 22px 0 0 21px;
    fill: none;
    stroke: #222;
    stroke-width: 2;
}

.win-controls {
    margin-left: auto;
    margin-right: 27px;
    margin-top: 22px;
    display: flex;
    gap: 53px;
}

.win-controls svg {
    width: 16px;
    height: 16px;
    fill: none;
    stroke: #222;
    stroke-width: 1.500;
}

/* Browser toolbar */
.toolbar {
    height: 70px;
    flex-shrink: 0;
    display: flex;
    align-items: center;
    padding: 0 25px 0 21px;
    background: #fff;
    border-bottom: 2px solid #cfcfcf;
    border-radius: 12px 12px 0 0;
    font-family: "Noto Sans", sans-serif;
}

.tool-icon {
    width: 24px;
    height: 24px;
    margin-right: 30px;
    fill: none;
    stroke: #222;
    stroke-width: 2.200;
}

.tool-off {
    stroke: #9a9a9a;
}

.omnibox {
    width: 1453px;
    height: 51px;
    margin-left: -3px;
    padding: 0 23px 0 8px;
    display: flex;
    align-items: center;
    background: #e0e0e0;
    border-radius: 26px;
}

.site-info {
    width: 36px;
    height: 36px;
    display: flex;
    align-items: center;
    justify-content: center;
    background: #fff;
    border-radius: 50%;
}

.site-info svg {
    width: 22px;
    height: 22px;
    fill: none;
    stroke: #222;
    stroke-width: 2;
}

.url {
    margin-left: 12px;
    margin-right: auto;
    font-size: 20px;
    color: #1f1f1f;
}

.url-port {
    color: #5f6368;
}

.omni-icon {
    width: 24px;
    height: 24px;
    margin-left: 25px;
    fill: none;
    stroke: #555;
    stroke-width: 2;
}

.tool-ext {
    margin: 0 26px 0 29px;
}

.tool-sep {
    width: 2px;
    height: 24px;
    background: #fddbc9;
    margin-right: 14px;
}

.profile {
    width: 126px;
    height: 51px;
    padding-left: 15px;
    display: flex;
    align-items: center;
    gap: 9px;
    background: #fddbc9;
    border-radius: 26px;
    font-size: 17px;
    color: #333;
}

.profile-dot {
    width: 30px;
    height: 30px;
    display: flex;
    align-items: center;
    justify-content: center;
    background: #0a96a8;
    border-radius: 50%;
    color: #fff;
    font-size: 16px;
}

.kebab {
    margin-left: 30px;
    display: flex;
    flex-direction: column;
    gap: 5px;
}

.kebab span {
    width: 4px;
    height: 4px;
    background: #333;
    border-radius: 50%;
}

/* Viewport */
.viewport {
    height: 879px;
    flex-shrink: 0;
    display: flex;
}

.app {
    position: relative;
    flex: 1;
    overflow: hidden;
    background: linear-gradient(135deg, #030712, #101828);
}

.scrollbar {
    width: 23px;
    display: flex;
    flex-direction: column;
    align-items: center;
    background: #fff;
}

.scroll-up,
.scroll-down {
    width: 0;
    height: 0;
    border-left: 7px solid transparent;
    border-right: 7px solid transparent;
    flex-shrink: 0;
}

.scroll-up {
    margin-top: 9px;
    border-bottom: 9px solid #8a8a8a;
}

.scroll-down {
    margin-bottom: 6px;
    border-top: 9px solid #8a8a8a;
}

.scroll-track {
    flex: 1;
    width: 100%;
    padding: 11px 4px 0;
}

.scroll-thumb {
    display: block;
    width: 100%;
    height: 230px;
    background: #8a8a8a;
    border-radius: 8px;
}

/* Navbar */
.navbar {
    height: 67px;
    background: rgba(16, 24, 40, 0.8);
    position: relative;
}

.navbar::after {
    content: "";
    position: absolute;
    left: 0;
    right: 0;
    bottom: 0;
    height: 2px;
    background: linear-gradient(90deg, #2b7fff, #9810fa 50%, #2b7fff);
}

.nav-inner {
    max-width: 1280px;
    height: 65px;
    margin: 0 auto;
    padding: 0 32px;
    display: flex;
    align-items: center;
    justify-content: space-between;
}

.brand {
    display: flex;
    align-items: center;
    gap: 12px;
}

.brand-logo {
    width: 40px;
    height: 40px;
    display: flex;
    align-items: center;
    justify-content: center;
    border-radius: 12px;
    background: linear-gradient(135deg, #2b7fff, #9810fa);
}

.brand-name {
    padding-top: 1px;
    font-size: 20px;
    font-weight: bold;
    background: linear-gradient(90deg, #2b7fff, #ad46ff);
    -webkit-background-clip: text;
    background-clip: text;
    color: transparent;
}

.nav-links {
    display: flex;
    gap: 36px;
}

.nav-link {
    display: flex;
    align-items: center;
    gap: 8px;
    font-size: 14px;
    color: #d1d5dc;
}

.nav-actions {
    display: flex;
    align-items: center;
    gap: 12px;
}

.icon-btn {
    position: relative;
    width: 36px;
    height: 36px;
    display: flex;
    align-items: center;
    justify-content: center;
    color: #99a1af;
}

.logout-btn {
    color: #ff6467;
}

.notify-dot {
    position: absolute;
    top: -2px;
    right: -2px;
    width: 8px;
    height: 8px;
    background: #fb2c36;
    border-radius: 50%;
}

.theme-btn {
    width: 36px;
    height: 36px;
    display: flex;
    align-items: center;
    justify-content: center;
    border-radius: 12px;
    background: linear-gradient(135deg, #2b7fff, #9810fa);
}

.nav-divider {
    width: 1px;
    height: 36px;
    background: #364153;
}

.user-avatar {
    width: 32px;
    height: 32px;
    display: flex;
    align-items: center;
    justify-content: center;
    border-radius: 50%;
    background: linear-gradient(135deg, #00c950, #00a6f4);
    color: #fff;
    font-size: 14px;
    font-weight: bold;
}

.user-info {
    text-align: right;
}

.user-name {
    font-size: 14px;
    line-height: 20px;
    color: #fff;
}

.user-role {
    font-size: 12px;
    line-height: 16px;
    color: #99a1af;
}

/* Main content */
.main {
    max-width: 1280px;
    margin: 0 auto;
    padding: 33px 32px 32px;
}

.page-title {
    font-size: 30px;
    line-height: 36px;
    font-weight: bold;
    color: #fff;
    margin-bottom: 8px;
}

.page-sub {
    font-size: 16px;
    line-height: 24px;
    color: #99a1af;
    margin-bottom: 32px;
}

.stats {
    display: grid;
    grid-template-columns: repeat(4, 1fr);
    gap: 24px;
    margin-bottom: 32px;
}

.stat-card {
    height: 138px;
    padding: 0 24px;
    display: flex;
    align-items: center;
    justify-content: space-between;
    background: #1e2939;
    border: 1px solid #2c3849;
    border-radius: 16px;
}

.stat-label {
    font-size: 14px;
    line-height: 20px;
    color: #99a1af;
}

.stat-value {
    margin-top: 7px;
    font-size: 30px;
    line-height: 36px;
    font-weight: bold;
    color: #fff;
}

.stat-trend {
    margin-top: 5px;
    display: flex;
    align-items: center;
    gap: 4px;
    font-size: 14px;
    line-height: 20px;
    color: #05df72;
}

.stat-icon {
    width: 56px;
    height: 56px;
    display: flex;
    align-items: center;
    justify-content: center;
    border-radius: 16px;
    box-shadow: 0 6px 12px rgba(0, 0, 0, 0.15);
}

/* Filter bar */
.filter-bar {
    height: 100px;
    padding: 0 24px;
    display: flex;
    align-items: center;
    justify-content: space-between;
    background: #1e2939;
    border: 1px solid #2c3849;
    border-radius: 16px;
    margin-bottom: 32px;
}

.search-box {
    position: relative;
    width: 448px;
}

.search-icon {
    position: absolute;
    top: 15px;
    left: 12px;
    color: #99a1af;
}

.search-input {
    width: 100%;
    height: 50px;
    padding: 0 16px 0 40px;
    background: #364153;
    border: 1px solid #4a5565;
    border-radius: 12px;
    font-family: inherit;
    font-size: 16px;
    color: #fff;
    outline: none;
}

.search-input::placeholder {
    color: #99a1af;
    opacity: 1;
}

.filter-right {
    display: flex;
    align-items: center;
    gap: 14px;
    margin-right: -1px;
}

.filter-icon {
    color: #6a7282;
}

.dept-select {
    position: relative;
    width: 178px;
    height: 48px;
    padding: 0 5px 0 21px;
    display: flex;
    align-items: center;
    justify-content: space-between;
    background: #364153;
    border: 2px solid #2b7fff;
    border-radius: 12px;
    font-size: 16px;
    color: #fff;
}

.dept-chevron {
    stroke-width: 3;
}

.dept-menu {
    position: absolute;
    top: 45px;
    left: 2px;
    right: -1px;
    z-index: 5;
    padding-bottom: 1px;
    background: #364153;
    border-top: 1px solid #767676;
    border-left: 1px solid #767676;
}

.dept-menu li {
    height: 36px;
    padding-left: 21px;
    line-height: 36px;
    color: #fff;
}

.dept-menu .selected {
    background: #1967d2;
}

/* Employee cards */
.employees {
    display: grid;
    grid-template-columns: repeat(4, 1fr);
    gap: 24px;
}

.emp-card {
    padding: 24px;
    background: #1e2939;
    border: 1px solid #2c3849;
    border-radius: 16px;
    overflow: hidden;
    min-width: 0;
}

.emp-head {
    display: flex;
    align-items: center;
    gap: 16px;
    margin-bottom: 16px;
}

.emp-avatar {
    position: relative;
    width: 8px;
    height: 64px;
    flex-shrink: 0;
    background: #364153;
    border-radius: 8px;
}

.emp-status {
    position: absolute;
    left: -10px;
    bottom: -2px;
    width: 20px;
    height: 20px;
    background: #00c950;
    border-radius: 50%;
}

.emp-name {
    font-size: 18px;
    line-height: 28px;
    font-weight: bold;
    color: #fff;
    white-space: nowrap;
}

.emp-email {
    display: flex;
    align-items: center;
    gap: 4px;
    font-size: 14px;
    line-height: 20px;
    color: #99a1af;
    white-space: nowrap;
}

.emp-tags {
    display: flex;
    align-items: center;
    justify-content: space-between;
    margin-bottom: 16px;
}

.dept-badge {
    height: 24px;
    padding: 0 12px;
    display: flex;
    align-items: center;
    gap: 4px;
    border-radius: 12px;
    color: #fff;
    font-size: 12px;
    font-weight: bold;
}

.mark-btn {
    width: 32px;
    height: 32px;
    display: flex;
    align-items: center;
    justify-content: center;
    background: #364153;
    border-radius: 12px;
    color: #99a1af;
}

.mark-btn.marked {
    background: #3d3428;
    color: #fdc700;
}

.mark-btn.marked svg {
    fill: #fdc700;
}

.emp-rating {
    height: 20px;
    display: flex;
    align-items: center;
    margin-bottom: 16px;
}

.stars {
    display: flex;
}

.stars svg {
    width: 16px;
    height: 16px;
    flex-shrink: 0;
}

.star-full {
    fill: #fdc700;
    stroke: #fdc700;
    stroke-width: 2;
    stroke-linejoin: round;
}

.star-empty {
    fill: none;
    stroke: #d1d5dc;
    stroke-width: 2;
    stroke-linejoin: round;
}

.star-half {
    width: 16px;
    height: 16px;
    flex-shrink: 0;
    clip-path: inset(0 50% 0 0);
}

.rating-num {
    margin-left: 8px;
    font-size: 14px;
    font-weight: bold;
    color: #d1d5dc;
}

.perf {
    margin-left: auto;
    font-size: 12px;
    color: #99a1af;
}

.emp-info {
    display: flex;
    flex-direction: column;
    gap: 8px;
    margin-bottom: 16px;
}

.emp-info li {
    display: flex;
    align-items: center;
    gap: 8px;
    font-size: 14px;
    line-height: 20px;
    color: #99a1af;
}

.salary {
    height: 52px;
    padding: 0 12px;
    display: flex;
    align-items: center;
    justify-content: space-between;
    background: #2a3547;
    border-radius: 12px;
    margin-bottom: 16px;
}

.salary-label {
    font-size: 14px;
    color: #99a1af;
}

.salary-value {
    font-size: 18px;
    font-weight: bold;
    color: #05df72;
}

.emp-actions {
    display: flex;
    gap: 8px;
}

.act-btn {
    flex: 1;
    height: 40px;
    padding: 0 16px;
    display: flex;
    align-items: center;
    justify-content: center;
    gap: 8px;
    border-radius: 12px;
    color: #fff;
    font-size: 16px;
    white-space: nowrap;
}

.next-badge {
    position: absolute;
    left: 20px;
    bottom: 20px;
    width: 36px;
    height: 36px;
    display: flex;
    align-items: center;
    justify-content: center;
    background: #000;
    border: 1px solid #2a2a2a;
    border-radius: 50%;
    color: #fff;
    font-size: 16px;
}

/* Windows taskbar */
.taskbar {
    height: 71px;
    flex-shrink: 0;
    padding-bottom: 2px;
    display: flex;
    align-items: center;
    background: #201f1e;
    border-top: 2px solid #3b3b3b;
    font-family: "Noto Sans", sans-serif;
    color: #fff;
}

.weather {
    position: relative;
    width: 40px;
    height: 34px;
    margin: 0 250px 0 30px;
}

.weather-cloud {
    position: absolute;
    left: 0;
    bottom: 5px;
    width: 36px;
    height: 24px;
}

.weather-badge {
    position: absolute;
    top: -10px;
    left: 17px;
    width: 23px;
    height: 24px;
    display: flex;
    align-items: center;
    justify-content: center;
    background: #ff9ca6;
    border-radius: 50%;
    color: #111;
    font-size: 14px;
}

.task-tile {
    position: relative;
    width: 60px;
    height: 59px;
    flex-shrink: 0;
    margin-right: 6px;
    display: flex;
    align-items: center;
    justify-content: center;
    border-radius: 6px;
}

.task-tile-first {
    margin-left: 7px;
}

.win-logo {
    width: 36px;
    height: 36px;
    display: grid;
    grid-template-columns: 1fr 1fr;
    gap: 2px;
}

.win-logo i {
    background: linear-gradient(135deg, #6fd6ff, #149cf0);
    border-radius: 1px;
}

.task-search {
    width: 329px;
    height: 48px;
    flex-shrink: 0;
    margin-left: 1px;
    padding: 0 12px 0 18px;
    display: flex;
    align-items: center;
    background: #3f3f3f;
    border: 1px solid #555;
    border-radius: 24px;
}

.task-search-icon {
    width: 26px;
    height: 26px;
    fill: none;
    stroke: #e6e6e6;
    stroke-width: 2;
}

.task-search-text {
    margin-left: 11px;
    font-size: 19px;
    color: #d6d6d6;
}

.task-search-art {
    width: 64px;
    height: 46px;
    margin-left: auto;
}

.task-icon {
    width: 36px;
    height: 36px;
}

.task-icon-tall {
    height: 40px;
}

.task-icon-photo {
    width: 32px;
    height: 38px;
}

.chrome-logo {
    display: block;
    width: 36px;
    height: 36px;
    flex-shrink: 0;
    border-radius: 50%;
    background:
        radial-gradient(circle closest-side, #1a73e8 0 42%, #fff 44% 56%, transparent 58%),
        conic-gradient(from 300deg, #ea4335 0 120deg, #fbbc04 120deg 240deg, #34a853 240deg 360deg);
}

.chrome-gray {
    width: 24px;
    height: 24px;
    background:
        radial-gradient(circle closest-side, #4a4d50 0 34%, #fff 36% 50%, transparent 52%),
        conic-gradient(from 300deg, #3c4043 0 120deg, #80868b 120deg 240deg, #5f6368 240deg 360deg);
}

.tile-alert {
    background: #7a4a4b;
}

.tile-open {
    background: #393835;
}

.tile-dot {
    position: absolute;
    left: 50%;
    bottom: 2px;
    width: 8px;
    height: 8px;
    margin-left: -4px;
    background: #9a9a9a;
    border-radius: 50%;
}

.tile-bar {
    position: absolute;
    left: 6px;
    right: 6px;
    bottom: 1px;
    height: 5px;
    background: #ff9ca6;
    border-radius: 3px;
}

.tile-bar-blue {
    left: 18px;
    right: 18px;
    background: #4cc2ff;
}

.tile-count {
    position: absolute;
    top: 5px;
    right: -1px;
    width: 38px;
    height: 22px;
    display: flex;
    align-items: center;
    justify-content: center;
    background: #4cc2ff;
    border-radius: 10px;
    color: #111;
    font-size: 16px;
}

.tile-mini {
    position: absolute;
    top: 5px;
    right: 6px;
    width: 26px;
    height: 30px;
    border-radius: 50%;
}

.tile-mini-photo {
    right: 4px;
    top: 4px;
    background: linear-gradient(160deg, #7d7060, #a89580 60%, #5a4c40);
}

.tile-mini-a {
    display: flex;
    align-items: center;
    justify-content: center;
    background: #0a8fa0;
    color: #d8f2f5;
    font-size: 14px;
}

.tile-mini-gray {
    background: #4a4a4a;
}

.tray {
    margin-left: auto;
    padding-right: 33px;
    display: flex;
    align-items: center;
}

.tray-chevron {
    width: 22px;
    height: 22px;
    margin-right: 24px;
    fill: none;
    stroke: #fff;
    stroke-width: 2;
}

.tray-cloud {
    width: 28px;
    height: 24px;
    margin-right: 16px;
}

.tray-lang {
    width: 56px;
    margin-left: -1px;
    margin-right: 1px;
    text-align: center;
    font-size: 17px;
    line-height: 24px;
}

.tray-icon {
    width: 24px;
    height: 24px;
    margin-left: 12px;
    fill: none;
    stroke: #fff;
    stroke-width: 1.500;
}

.tray-wifi {
    margin-left: 16px;
}

.tray-clock {
    width: 100px;
    margin-left: 17px;
    text-align: right;
    font-size: 17.500px;
    line-height: 24px;
    white-space: nowrap;
}

.tray-bell {
    position: relative;
    width: 24px;
    height: 28px;
    margin-left: 9px;
}

.tray-bell svg {
    width: 24px;
    height: 28px;
}

.tray-zz {
    position: absolute;
    top: -4px;
    right: -3px;
    font-size: 13px;
    font-weight: bold;
}

.tray-zz-inner {
    position: absolute;
    top: 6px;
    left: 8px;
    font-size: 11px;
    font-weight: bold;
    color: #201f1e;
}
```
